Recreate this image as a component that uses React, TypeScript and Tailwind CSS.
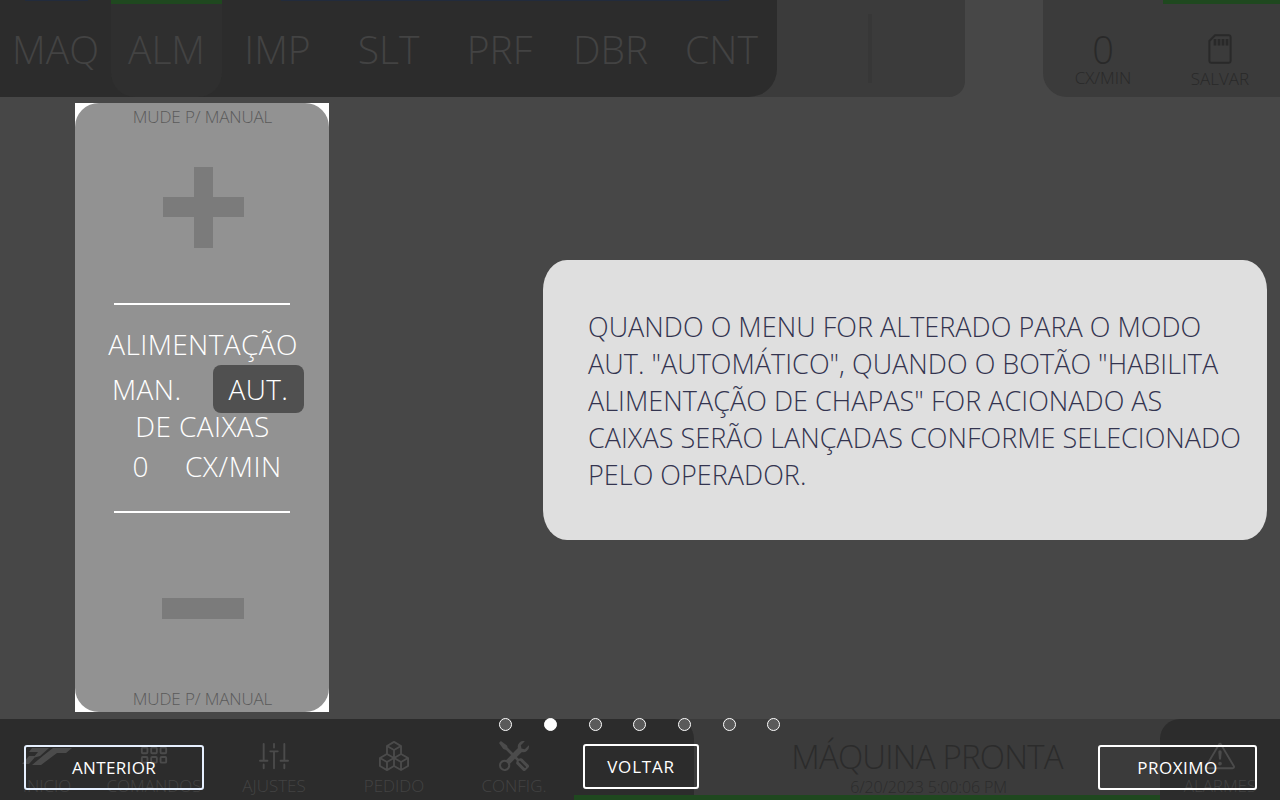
import React from "react";
import {
  BsBoxes,
  BsExclamationTriangle,
  BsGrid3X2Gap,
  BsSliders2Vertical,
  BsTools,
} from "react-icons/bs";

const tabs = ["MAQ", "ALM", "IMP", "SLT", "PRF", "DBR", "CNT"];
const lines = [
  "QUANDO O MENU FOR ALTERADO PARA O MODO",
  'AUT. "AUTOMÁTICO", QUANDO O BOTÃO "HABILITA',
  "ALIMENTAÇÃO DE CHAPAS\" FOR ACIONADO AS",
  "CAIXAS SERÃO LANÇADAS CONFORME SELECIONADO",
  "PELO OPERADOR.",
];

function Logo() {
  return (
    <svg className="h-[19px] w-[50px]" viewBox="0 0 50 19" fill="currentColor">
      <path d="M10 1H27L18 9L11 11L16 5H7ZM31 1H50L44 6H35L19 18H10L22 8ZM7 9H14L7 17H0Z" />
    </svg>
  );
}

function SdCard() {
  return (
    <svg className="h-[30px] w-[24px]" viewBox="0 0 24 30" fill="none" stroke="currentColor" strokeWidth="2">
      <path d="M7 1.2H21A1.8 1.8 0 0 1 22.6 3V27A1.8 1.8 0 0 1 21 28.8H3A1.8 1.8 0 0 1 1.4 27V7Z" />
      <path d="M7 5V11.5M11 5V11.5M15 5V11.5M19 5V11.5" strokeWidth="2.7" />
    </svg>
  );
}

function NavItem({ icon, label, className }: { icon: React.ReactNode; label: string; className: string }) {
  return (
    <div className={`flex flex-col items-center pt-[22px] ${className}`}>
      <div className="flex h-[30px] items-start justify-center text-[#4b4b4b]">{icon}</div>
      <span className="mt-[4px] text-[17px] leading-[22px] whitespace-nowrap text-[#434343]">{label}</span>
    </div>
  );
}

function Header() {
  return (
    <header className="flex h-[97px] justify-between">
      <div className="flex h-full w-[965px] rounded-br-[16px] bg-[#3b3b3b]">
        <nav className="relative flex w-[777px] rounded-br-[28px] bg-[#2c2c2c]">
          {tabs.map((t) => (
            <div
              key={t}
              className={`flex w-[111px] justify-center pt-[22px] text-[39px] leading-[53px] text-[#434343] ${
                t === "ALM" ? "rounded-b-[24px] bg-[#2f2f2f] shadow-[inset_0_4px_0_#1f481f]" : ""
              }`}
            >
              {t}
            </div>
          ))}
          <div className="absolute top-0 left-[25px] h-px w-[63px] bg-[#222b3c]" />
          <div className="absolute top-0 left-[281px] h-px w-[448px] bg-[#222b3c]" />
        </nav>
        <div className="mt-[14px] ml-[91px] h-[69px] w-[4px] bg-[#373737]" />
      </div>
      <div className="flex h-full w-[237px] rounded-bl-[24px] bg-[#3b3b3b] text-[#292929]">
        <div className="flex w-[120px] flex-col items-center pt-[32px]">
          <span className="text-[38px] leading-[35px]">0</span>
          <span className="text-[17px] leading-[22px]">CX/MIN</span>
        </div>
        <div className="flex w-[117px] flex-col items-center pt-[34px] pr-[3px] shadow-[inset_0_4px_0_#1f481f]">
          <SdCard />
          <span className="mt-[4px] text-[17px] leading-[22px]">SALVAR</span>
        </div>
      </div>
    </header>
  );
}

function FeedCard() {
  return (
    <section className="mt-[6px] ml-[75px] h-[609px] w-[254px] bg-white">
      <div className="flex h-full flex-col items-center rounded-[24px] bg-[#929292] text-white">
        <span className="mt-[3px] ml-[1px] text-[17px] leading-[22px] tracking-[-0.13px] text-[#5a5a5a]">MUDE P/ MANUAL</span>
        <svg className="mt-[39px] ml-[2px] h-[81px] w-[81px]" viewBox="0 0 81 81" fill="#7b7b7b">
          <path d="M31 0H50V30H81V50H50V81H31V50H0V30H31Z" />
        </svg>
        <div className="mt-[55px] h-[2px] w-[176px] bg-white" />
        <div className="mt-[20px] flex w-[254px] flex-col items-center text-[28px] tracking-[0.4px]">
          <span className="ml-[2px] leading-[39px]">ALIMENTAÇÃO</span>
          <div className="mt-px flex h-[48px] w-full items-center pl-[37px]">
            <span className="w-[101px] leading-[38px]">MAN.</span>
            <span className="flex h-[48px] w-[91px] items-center justify-center rounded-[8px] bg-[#505050]">AUT.</span>
          </div>
          <span className="-mt-[6px] ml-[1px] leading-[39px]">DE CAIXAS</span>
          <div className="flex w-full gap-[36px] pl-[57.5px] leading-[41px]">
            <span>0</span>
            <span className="tracking-[0.6px]">CX/MIN</span>
          </div>
        </div>
        <div className="mt-[24px] h-[2px] w-[176px] bg-white" />
        <div className="mt-[85px] ml-[2px] h-[21px] w-[82px] bg-[#7b7b7b]" />
        <span className="mt-auto mb-[2px] ml-[1px] text-[17px] leading-[22px] tracking-[-0.13px] text-[#5a5a5a]">MUDE P/ MANUAL</span>
      </div>
    </section>
  );
}

function Footer() {
  return (
    <footer className="flex h-[81px] bg-[#3b3b3b]">
      <div className="flex w-[694px] rounded-tr-[20px] bg-[#2c2c2c]">
        <NavItem icon={<div className="pt-[6px]"><Logo /></div>} label="INICIO" className="w-[94px]" />
        <NavItem icon={<BsGrid3X2Gap size={30} />} label="COMANDOS" className="w-[120px]" />
        <NavItem icon={<BsSliders2Vertical size={30} />} label="AJUSTES" className="w-[120px]" />
        <NavItem icon={<BsBoxes size={30} />} label="PEDIDO" className="w-[120px]" />
        <NavItem icon={<BsTools size={30} />} label="CONFIG." className="w-[120px]" />
        <div className="w-[120px] self-end border-b-[5px] border-[#1f481f]" />
      </div>
      <div className="flex w-[466px] flex-col items-center border-b-[5px] border-[#1f481f] pt-[18px] text-[#2b2b2b]">
        <span className="text-[33px] leading-[40px] tracking-[-0.8px]">MÁQUINA PRONTA</span>
        <span className="ml-[3px] text-[16px] leading-[20px] tracking-[-0.15px]">6/20/2023 5:00:06 PM</span>
      </div>
      <NavItem
        icon={<BsExclamationTriangle size={30} />}
        label="ALARMES"
        className="w-[120px] rounded-tl-[20px] bg-[#2c2c2c]"
      />
    </footer>
  );
}

function TourControls() {
  const button = "flex h-[45px] items-center justify-center rounded-[3px] border-2 text-[17px] font-normal text-white";
  return (
    <div className="absolute inset-x-0 bottom-0 h-[82px]">
      <div className="flex h-[13px] gap-[31.68px] pl-[499.45px]">
        {[0, 1, 2, 3, 4, 5, 6].map((i) => (
          <button
            key={i}
            className={`h-[13px] w-[13px] rounded-full border border-white ${i === 1 ? "bg-white" : "bg-[#5a5a5a]"}`}
          />
        ))}
      </div>
      <div className="mt-[13px] flex items-start pl-[24px]">
        <button className={`${button} mt-px w-[180px] border-[#e6f0ff] tracking-[0.35px]`}>ANTERIOR</button>
        <button className={`${button} ml-[379px] w-[116px] border-white tracking-[0.8px]`}>VOLTAR</button>
        <button className={`${button} mt-px ml-[399px] w-[159px] border-white tracking-[0.5px]`}>PROXIMO</button>
      </div>
    </div>
  );
}

export default function App() {
  return (
    <div className="relative flex h-[800px] w-[1280px] flex-col overflow-hidden bg-[#474747] font-['Open_Sans',sans-serif] font-light">
      <Header />
      <main className="flex h-[622px]">
        <FeedCard />
        <section className="mt-[163px] ml-[214px] flex h-[280px] w-[724px] flex-col rounded-[24px/30px] bg-[#dfdfdf] pt-[48px] pl-[45px] text-[27px] leading-[37px] tracking-[0.03px] text-[#33344f]">
          {lines.map((l) => (
            <span key={l} className="whitespace-nowrap">{l}</span>
          ))}
        </section>
      </main>
      <Footer />
      <TourControls />
    </div>
  );
}
